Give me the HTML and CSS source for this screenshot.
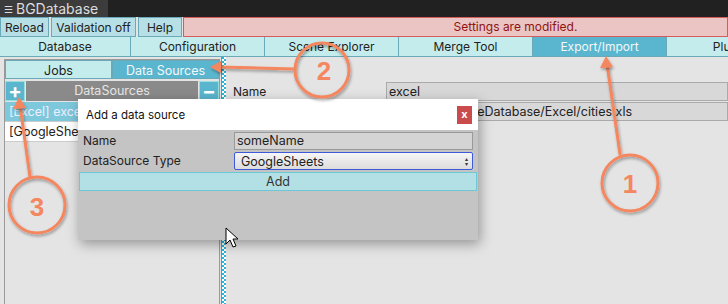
FILE: index.html
```html
<!DOCTYPE html>
<html lang="en">
<head>
  <meta charset="UTF-8" />
  <title>BGDatabase</title>
  <link rel="stylesheet" href="styles.css">
</head>
<body>
  <div class="window">
    <!-- title bar -->
    <div class="titlebar">
      <div class="title-tab"><span class="title-icon">&#9776;</span>BGDatabase</div>
    </div>

    <!-- toolbar -->
    <div class="toolbar">
      <button class="tool-btn btn-reload">Reload</button>
      <button class="tool-btn btn-valid">Validation off</button>
      <button class="tool-btn btn-help">Help</button>
      <div class="warning">Settings are modified.</div>
    </div>

    <!-- main tabs -->
    <div class="main-tabs">
      <div class="main-tab">Database</div>
      <div class="main-tab">Configuration</div>
      <div class="main-tab">Scene Explorer</div>
      <div class="main-tab">Merge Tool</div>
      <div class="main-tab active">Export/Import</div>
      <div class="main-tab">Plugins</div>
    </div>

    <div class="content">
      <div class="left-panel">
        <div class="sub-tabs">
          <div class="sub-tab">Jobs</div>
          <div class="sub-tab active">Data Sources</div>
        </div>
        <div class="list-head">
          <div class="square-btn">+</div>
          <div class="list-title">DataSources</div>
          <div class="square-btn minus">&minus;</div>
        </div>
        <div class="list-row selected">[Excel] excel</div>
        <div class="list-row">[GoogleSheets] sheets</div>
      </div>

      <div class="divider"></div>

      <div class="right-panel">
        <div class="field-row">
          <div class="field-label">Name</div>
          <div class="field-input">excel</div>
        </div>
        <div class="field-row">
          <div class="field-label">File</div>
          <div class="field-input">Assets/BGSomeDatabase/Excel/cities.xls</div>
        </div>
      </div>
    </div>

    <!-- dialog -->
    <div class="dialog">
      <div class="dialog-head">
        <span>Add a data source</span>
        <div class="close-btn">x</div>
      </div>
      <div class="dialog-body">
        <div class="dlg-row">
          <div class="dlg-label">Name</div>
          <div class="dlg-input">someName</div>
        </div>
        <div class="dlg-row">
          <div class="dlg-label">DataSource Type</div>
          <div class="dlg-select">GoogleSheets<span class="arrows">&#9652;<br>&#9662;</span></div>
        </div>
        <div class="add-btn">Add</div>
      </div>
    </div>

    <!-- annotations -->
    <svg class="notes" width="728" height="304" viewBox="0 0 728 304">
      <defs>
        <filter id="sh" x="-20%" y="-20%" width="140%" height="140%">
          <feDropShadow dx="1" dy="2" stdDeviation="1.5" flood-color="#000" flood-opacity="0.35"/>
        </filter>
      </defs>
      <g fill="none" stroke="#f4875f" stroke-width="3" stroke-linecap="round" filter="url(#sh)">
        <line x1="620" y1="154" x2="607" y2="64"/>
        <circle cx="630" cy="183" r="28"/>
        <line x1="295" y1="69" x2="218" y2="67"/>
        <circle cx="322" cy="70" r="27"/>
        <line x1="30" y1="177" x2="20" y2="105"/>
        <circle cx="37" cy="205" r="28"/>
      </g>
      <g fill="#f4875f" filter="url(#sh)">
        <polygon points="606,56 600,68 613,67"/>
        <polygon points="210,67 221,61 221,73"/>
        <polygon points="19,97 13,109 26,108"/>
      </g>
      <g fill="#f4875f" font-family="'Liberation Sans', sans-serif" font-weight="bold" font-size="26" text-anchor="middle">
        <text x="630" y="193">1</text>
        <text x="324" y="80">2</text>
        <text x="37" y="216">3</text>
      </g>
      <path d="M226 228 L226 244 L230 240 L233 247 L236 246 L233 239 L238 239 Z" fill="#fff" stroke="#000" stroke-width="1"/>
    </svg>
  </div>
</body>
</html>
```

FILE: styles.css
```css
:root {
  --cyan-light: #c5ecec;
  --cyan-btn: #b6e0e5;
  --cyan-dark: #5ab6cf;
  --cyan-border: #6aaab8;
  --panel: #e4e4e4;
  --text: #222;
}

body {
  margin: 0;
  font-family: Inter, "Noto Sans", sans-serif;
  font-size: 12px;
  color: var(--text);
  background-color: var(--panel);
}

.window {
  position: relative;
  width: 728px;
  height: 304px;
  overflow: hidden;
  display: flex;
  flex-direction: column;
}

.titlebar {
  height: 17px;
  background-color: #212121;
  display: flex;
}

.title-tab {
  width: 108px;
  background-color: #3c3c3c;
  color: #dcdcdc;
  font-size: 14px;
  line-height: 17px;
  padding-left: 4px;
  box-sizing: border-box;
}

.title-icon {
  font-size: 10px;
  margin-right: 3px;
  vertical-align: 1px;
}

.toolbar {
  height: 20px;
  display: flex;
  background-color: var(--panel);
}

.tool-btn {
  margin: 0 2px 0 0;
  padding: 0;
  height: 20px;
  border: 1px solid var(--cyan-border);
  background-color: var(--cyan-btn);
  font-family: inherit;
  font-size: 12px;
  color: var(--text);
}

.btn-reload { width: 49px; }
.btn-valid { width: 85px; }
.btn-help { width: 44px; margin-right: 1px; }

.warning {
  flex: 1;
  background-color: #ebc4c4;
  border: 1px solid #d65b5b;
  color: #8e1414;
  text-align: center;
  line-height: 18px;
  padding-left: 120px;
}

.main-tabs {
  height: 20px;
  display: flex;
  background-color: var(--cyan-light);
  border-bottom: 1px solid var(--cyan-border);
  box-sizing: border-box;
}

.main-tab {
  width: 134px;
  flex: none;
  text-align: center;
  line-height: 19px;
  border-right: 1px solid var(--cyan-border);
  box-sizing: border-box;
}

.main-tab:first-child { width: 131px; }

.main-tab.active {
  background-color: var(--cyan-dark);
  color: #f4f8f8;
}

.content {
  flex: 1;
  display: flex;
  padding-top: 2px;
}

.left-panel {
  width: 214px;
  margin-left: 4px;
  border: 1px solid #9a9a9a;
  border-bottom: none;
  background-color: var(--panel);
}

.sub-tabs {
  display: flex;
  height: 19px;
}

.sub-tab {
  flex: 1;
  text-align: center;
  line-height: 19px;
  background-color: var(--cyan-light);
  border: 1px solid var(--cyan-border);
  font-size: 12.5px;
}

.sub-tab.active {
  background-color: var(--cyan-dark);
  color: #f4f8f8;
}

.list-head {
  display: flex;
  height: 20px;
  margin-top: 2px;
  gap: 1px;
}

.square-btn {
  width: 20px;
  background-color: var(--cyan-dark);
  border: 1px solid #9dd;
  color: #fff;
  font-size: 20px;
  font-weight: bold;
  line-height: 18px;
  text-align: center;
  box-sizing: border-box;
}

.list-title {
  flex: 1;
  background-color: #8a8a8a;
  color: #e8e8e8;
  text-align: center;
  line-height: 20px;
  font-size: 12.5px;
}

.list-row {
  height: 19px;
  line-height: 19px;
  padding-left: 4px;
  background-color: #fff;
  border-bottom: 1px solid #ccc;
  white-space: nowrap;
  overflow: hidden;
  font-size: 12.5px;
}

.list-row.selected {
  background-color: #7ec8dc;
  color: #eef;
  margin-top: 1px;
}

.divider {
  width: 4px;
  margin: -2px 1px 0 1px;
  background-color: #2bb7d4;
  background-image:
    linear-gradient(45deg, #fff 25%, transparent 25%, transparent 75%, #fff 75%),
    linear-gradient(45deg, #fff 25%, transparent 25%, transparent 75%, #fff 75%);
  background-size: 4px 4px;
  background-position: 0 0, 2px 2px;
  border-left: 1px solid #888;
}

.right-panel {
  flex: 1;
  padding: 23px 0 0 6px;
}

.field-row {
  display: flex;
  height: 19px;
  margin-bottom: 1px;
}

.field-label {
  width: 153px;
  font-size: 12px;
  line-height: 19px;
}

.field-input {
  flex: 1;
  background-color: #d8d8d8;
  border: 1px solid #aaa;
  line-height: 17px;
  padding-left: 2px;
  font-size: 12.5px;
  white-space: nowrap;
  overflow: hidden;
}

.dialog {
  position: absolute;
  left: 78px;
  top: 99px;
  width: 400px;
  height: 141px;
  background-color: #c4c4c4;
  box-shadow: 2px 4px 12px rgba(0, 0, 0, 0.35);
  display: flex;
  flex-direction: column;
}

.dialog-head {
  height: 31px;
  background-color: #fff;
  display: flex;
  align-items: center;
  justify-content: space-between;
  padding: 0 6px 0 8px;
  font-size: 11.5px;
  color: #111;
}

.close-btn {
  width: 15px;
  height: 18px;
  background-color: #c94b4b;
  color: #fff;
  font-size: 11px;
  font-weight: bold;
  text-align: center;
  line-height: 17px;
}

.dialog-body {
  padding: 1px 1px 0 1px;
}

.dlg-row {
  display: flex;
  height: 19px;
  margin-bottom: 1px;
  padding: 0 4px;
}

.dlg-label {
  width: 151px;
  font-size: 12px;
  line-height: 19px;
}

.dlg-input {
  flex: 1;
  background-color: #d4d4d4;
  border: 1px solid #999;
  line-height: 16px;
  padding-left: 2px;
  font-size: 12.5px;
  margin-top: 1px;
}

.dlg-select {
  flex: 1;
  display: flex;
  justify-content: space-between;
  align-items: center;
  background: linear-gradient(#f6f6f6, #dcdcdc);
  border: 1px solid #3f5ad8;
  border-radius: 2px;
  padding: 0 4px 0 6px;
  line-height: 15px;
  font-size: 12.5px;
  margin-top: 1px;
}

.arrows {
  font-size: 6px;
  line-height: 5px;
  color: #333;
}

.add-btn {
  margin-top: 2px;
  height: 19px;
  background-color: #b3e0e4;
  border: 1px solid #6cc8d6;
  text-align: center;
  line-height: 18px;
  color: #333;
  font-size: 12.5px;
  box-sizing: border-box;
}

.notes {
  position: absolute;
  left: 0;
  top: 0;
}
```
